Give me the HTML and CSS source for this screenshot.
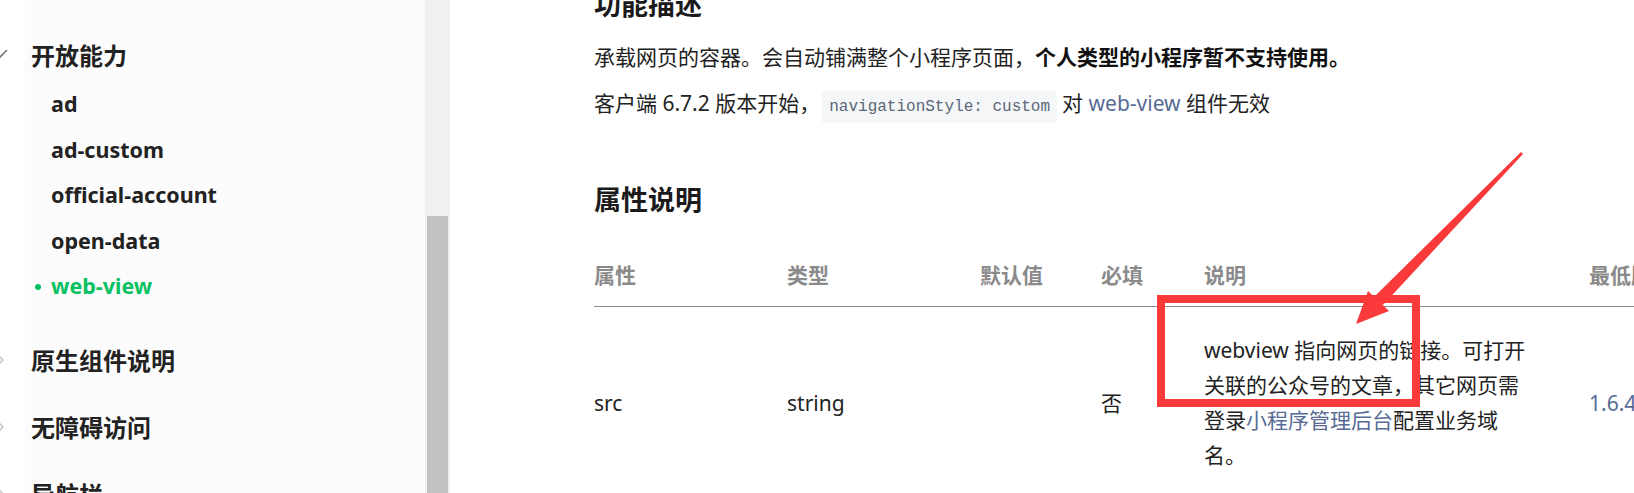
FILE: index.html
```html
<html>
<head>
    <meta charset="utf-8">
    <link rel="stylesheet" href="styles.css">
</head>
<body>
    <div class="gutter"></div>
    <div class="sidebar">
        <div class="group">
            <div class="group-title">
                <svg class="chev" width="16" height="16" viewBox="0 0 16 16"><path d="M1 4 L8 11 L15 4" fill="none" stroke="#7a7a7a" stroke-width="1.6"/></svg>
                开放能力
            </div>
            <div class="items">
                <a class="item">ad</a>
                <a class="item">ad-custom</a>
                <a class="item">official-account</a>
                <a class="item">open-data</a>
                <a class="item active">web-view</a>
            </div>
        </div>
        <div class="group">
            <div class="group-title">
                <svg class="chev" width="16" height="16" viewBox="0 0 16 16"><path d="M4 1 L11 8 L4 15" fill="none" stroke="#c8c8c8" stroke-width="1.6"/></svg>
                原生组件说明
            </div>
        </div>
        <div class="group">
            <div class="group-title">
                <svg class="chev" width="16" height="16" viewBox="0 0 16 16"><path d="M4 1 L11 8 L4 15" fill="none" stroke="#c8c8c8" stroke-width="1.6"/></svg>
                无障碍访问
            </div>
        </div>
        <div class="group">
            <div class="group-title">
                <svg class="chev" width="16" height="16" viewBox="0 0 16 16"><path d="M4 1 L11 8 L4 15" fill="none" stroke="#c8c8c8" stroke-width="1.6"/></svg>
                导航栏
            </div>
        </div>
    </div>
    <div class="scrollbar"><div class="thumb"></div></div>

    <div class="main">
        <h2 class="first">功能描述</h2>
        <p>承载网页的容器。会自动铺满整个小程序页面，<strong>个人类型的小程序暂不支持使用。</strong></p>
        <p>客户端 6.7.2 版本开始，<code>navigationStyle: custom</code>对 <a class="link">web-view</a> 组件无效</p>

        <h2>属性说明</h2>
        <div class="table">
            <div class="th">属性</div>
            <div class="th">类型</div>
            <div class="th">默认值</div>
            <div class="th">必填</div>
            <div class="th">说明</div>
            <div class="th">最低版本</div>

            <div class="td">src</div>
            <div class="td">string</div>
            <div class="td"></div>
            <div class="td">否</div>
            <div class="td desc">webview 指向网页的链接。可打开关联的公众号的文章，其它网页需登录<a class="link">小程序管理后台</a>配置业务域名。</div>
            <div class="td version">1.6.4</div>
        </div>
    </div>

    <!-- annotation drawn on top of the screenshot -->
    <svg class="markup" width="1634" height="493" viewBox="0 0 1634 493">
        <rect x="1161" y="299" width="255" height="104" fill="none" stroke="#fa3a3a" stroke-width="8"/>
        <polygon points="1521,152 1523,154 1383,305 1374,297" fill="#fa3a3a"/>
        <polygon points="1356,324 1368,291 1389,311" fill="#fa3a3a"/>
    </svg>
</body>
</html>
```

FILE: styles.css
```css
body {
    margin: 0;
    display: flex;
    height: 493px;
    overflow: hidden;
    font-family: "Noto Sans", "Noto Sans CJK SC", sans-serif;
    color: #1f1f1f;
    background-color: #ffffff;
}
.gutter {
    width: 25px;
    flex-shrink: 0;
    background: #ffffff;
}
.sidebar {
    width: 400px;
    flex-shrink: 0;
    background: #fcfcfc;
    padding-top: 32px;
    box-sizing: border-box;
}
.group {
    padding-bottom: 23px;
}
.group-title {
    display: flex;
    align-items: center;
    height: 44px;
    font-size: 24px;
    font-weight: bold;
    color: #222;
    padding-left: 6px;
}
.chev {
    margin-left: -39px;
    margin-right: 23px;
    flex-shrink: 0;
}
.items {
    display: flex;
    flex-direction: column;
    padding: 5px 0 6px 26px;
}
.item {
    height: 45.5px;
    line-height: 45.5px;
    font-size: 21.5px;
    font-weight: bold;
    color: #222;
    position: relative;
}
.item.active {
    color: #07c160;
}
.item.active::before {
    content: "";
    position: absolute;
    left: -16px;
    top: 21px;
    width: 6px;
    height: 6px;
    border-radius: 50%;
    background: #07c160;
}
.scrollbar {
    width: 25px;
    flex-shrink: 0;
    background: #f0f0f0;
    display: flex;
    flex-direction: column;
    padding: 216px 2px 0 2px;
    box-sizing: border-box;
}
.thumb {
    flex: 1;
    background: #c1c1c1;
}
.main {
    flex: 1;
    padding-left: 144px;
    margin-top: -13px;
    overflow: hidden;
}
h2 {
    font-size: 27px;
    line-height: 36px;
    font-weight: bold;
    color: #1a1a1a;
    margin: 58px 0 25px 0;
}
h2.first {
    margin: 0 0 17px 0;
}
p {
    font-size: 21px;
    line-height: 34px;
    margin: 0 0 12px 0;
    color: #222;
}
p strong {
    color: #111;
}
code {
    font-family: "Liberation Mono", monospace;
    font-size: 16px;
    color: #5a6678;
    background: #f5f6f7;
    border-radius: 3px;
    padding: 7px 7px;
    margin: 0 5px 0 2px;
}
.link {
    color: #576b95;
}
.table {
    display: grid;
    grid-template-columns: 193px 193px 121px 103px 385px 1fr;
    font-size: 21px;
}
.th {
    font-weight: bold;
    color: #8a8a8a;
    line-height: 34px;
    padding: 15px 0 14px 0;
    border-bottom: 1px solid #8c8c8c;
    white-space: nowrap;
}
.td {
    display: flex;
    align-items: center;
    line-height: 35px;
    padding: 26px 0;
    color: #222;
}
.td.desc {
    display: block;
    width: 328px;
}
.td.version {
    color: #576b95;
}
.markup {
    position: absolute;
    top: 0;
    left: 0;
    pointer-events: none;
}
```
